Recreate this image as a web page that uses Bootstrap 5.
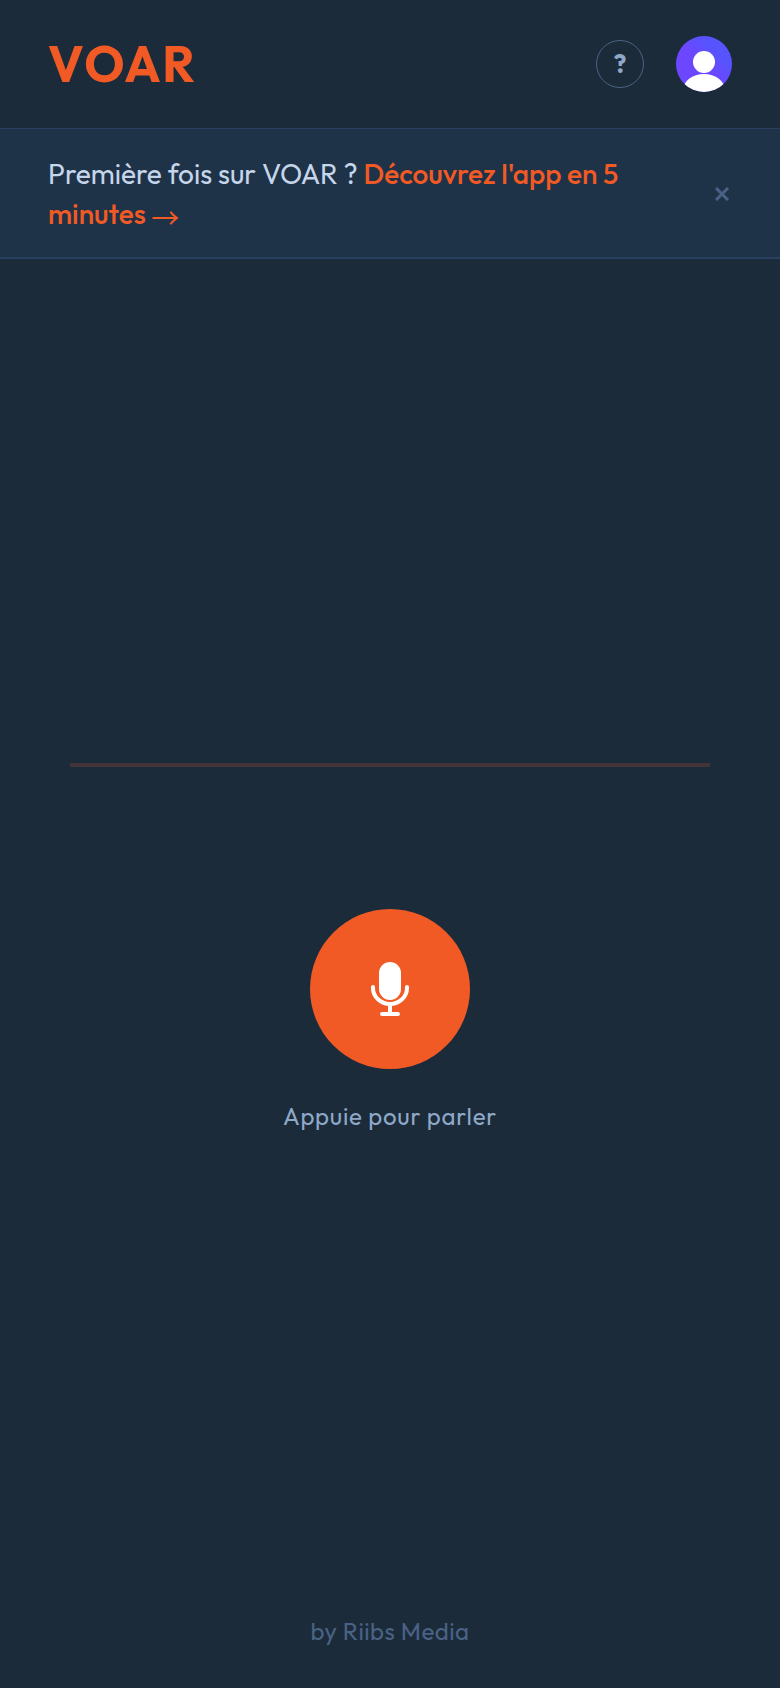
<!DOCTYPE html>
<html lang="fr">
<head>
<meta charset="utf-8">
<meta name="viewport" content="width=device-width, initial-scale=1">
<title>VOAR</title>
<link rel="stylesheet" href="https://cdn.jsdelivr.net/npm/bootstrap@5.3.0/dist/css/bootstrap.min.css">
<style>
body { background: #1b2b3a; color: #c5d5ea; font-family: Outfit, Lato, sans-serif; font-size: 28px; line-height: 40px; }
.gutter { padding-left: 48px; padding-right: 48px; }
.topbar { padding-top: 32px; padding-bottom: 32px; gap: 32px; border-bottom: 1px solid #2a4060; }
.brand { color: #f15a24; font-size: 50px; line-height: 64px; font-weight: 700; letter-spacing: .04em; }
.help { width: 48px; height: 48px; border: 1px solid #4a6285; color: #8fa8c8; font-size: 26px; line-height: 28px; font-weight: 700; }
.help:hover { border-color: #8fa8c8; color: #c5d5ea; }
.avatar { width: 56px; height: 56px; }
.intro { background: #1e3248; border-bottom: 2px solid #2a4060; padding-top: 25px; padding-bottom: 23px; gap: 48px; }
.intro a { color: #f15a24; font-weight: 500; }
.arrow { font-family: "Noto Sans CJK JP", sans-serif; font-weight: 400; line-height: 1; }
.dismiss { color: #4a6285; padding: 3px; }
.stage { padding: 0 70px; }
.wave { max-width: 640px; height: 120px; }
.wave div { height: 4px; background: #44343a; }
.mic { width: 160px; height: 160px; margin-top: 84px; background: #f15a24; color: #fff; }
.mic:hover { background: #d94c1a; color: #fff; }
.hint { margin-top: 32px; font-size: 24px; line-height: 30px; color: #8fa8c8; letter-spacing: .03em; }
.credit { padding: 40px 0 42px; font-size: 24px; line-height: 30px; color: #4a6285; letter-spacing: .02em; }
</style>
</head>
<body class="d-flex flex-column min-vh-100">
<header class="topbar gutter d-flex align-items-center">
  <a class="brand text-decoration-none me-auto" href="#">VOAR</a>
  <button type="button" class="help btn rounded-circle p-0 d-flex align-items-center justify-content-center" aria-label="Aide">?</button>
  <button type="button" class="avatar btn border-0 rounded-circle p-0 d-flex" aria-label="Mon compte">
    <svg width="56" height="56" viewBox="0 0 56 56" aria-hidden="true">
      <defs>
        <linearGradient id="avatarFill" x1="0" y1="1" x2="1" y2="0"><stop offset=".48" stop-color="#6c47ff"/><stop offset=".72" stop-color="#5753ff"/></linearGradient>
        <clipPath id="avatarClip"><circle cx="28" cy="28" r="28"/></clipPath>
      </defs>
      <g clip-path="url(#avatarClip)">
        <rect width="56" height="56" fill="url(#avatarFill)"/>
        <circle cx="28" cy="26" r="11" fill="#fff"/>
        <ellipse cx="28" cy="54" rx="21" ry="16" fill="#fff"/>
      </g>
    </svg>
  </button>
</header>
<section class="intro gutter d-flex align-items-center justify-content-between">
  <p class="m-0">Première fois sur VOAR ? <a class="text-decoration-none" href="#">Découvrez l'app en 5 minutes <span class="arrow align-middle">→</span></a></p>
  <button type="button" class="dismiss btn border-0 flex-shrink-0 d-flex" aria-label="Fermer">
    <svg width="14" height="14" viewBox="0 0 14 14" fill="none" stroke="currentColor" stroke-width="3" aria-hidden="true"><path d="M1 1l12 12M13 1L1 13"/></svg>
  </button>
</section>
<main class="stage flex-grow-1 d-flex flex-column align-items-center justify-content-center">
  <div class="wave w-100 d-flex align-items-center"><div class="w-100"></div></div>
  <button type="button" class="mic btn border-0 rounded-circle p-0 d-flex align-items-center justify-content-center" aria-labelledby="hint">
    <svg width="40" height="54" viewBox="0 0 40 54" fill="none" stroke="currentColor" stroke-width="4" stroke-linecap="round" aria-hidden="true">
      <rect x="9" y="0" width="22" height="38" rx="11" fill="currentColor" stroke="none"/>
      <path d="M3 25v1a17 16 0 0 0 34 0v-1M20 42v10M12 52h16"/>
    </svg>
  </button>
  <p class="hint mb-0" id="hint">Appuie pour parler</p>
</main>
<footer class="credit text-center">by Riibs Media</footer>
<script src="https://cdn.jsdelivr.net/npm/bootstrap@5.3.0/dist/js/bootstrap.bundle.min.js"></script>
</body>
</html>
